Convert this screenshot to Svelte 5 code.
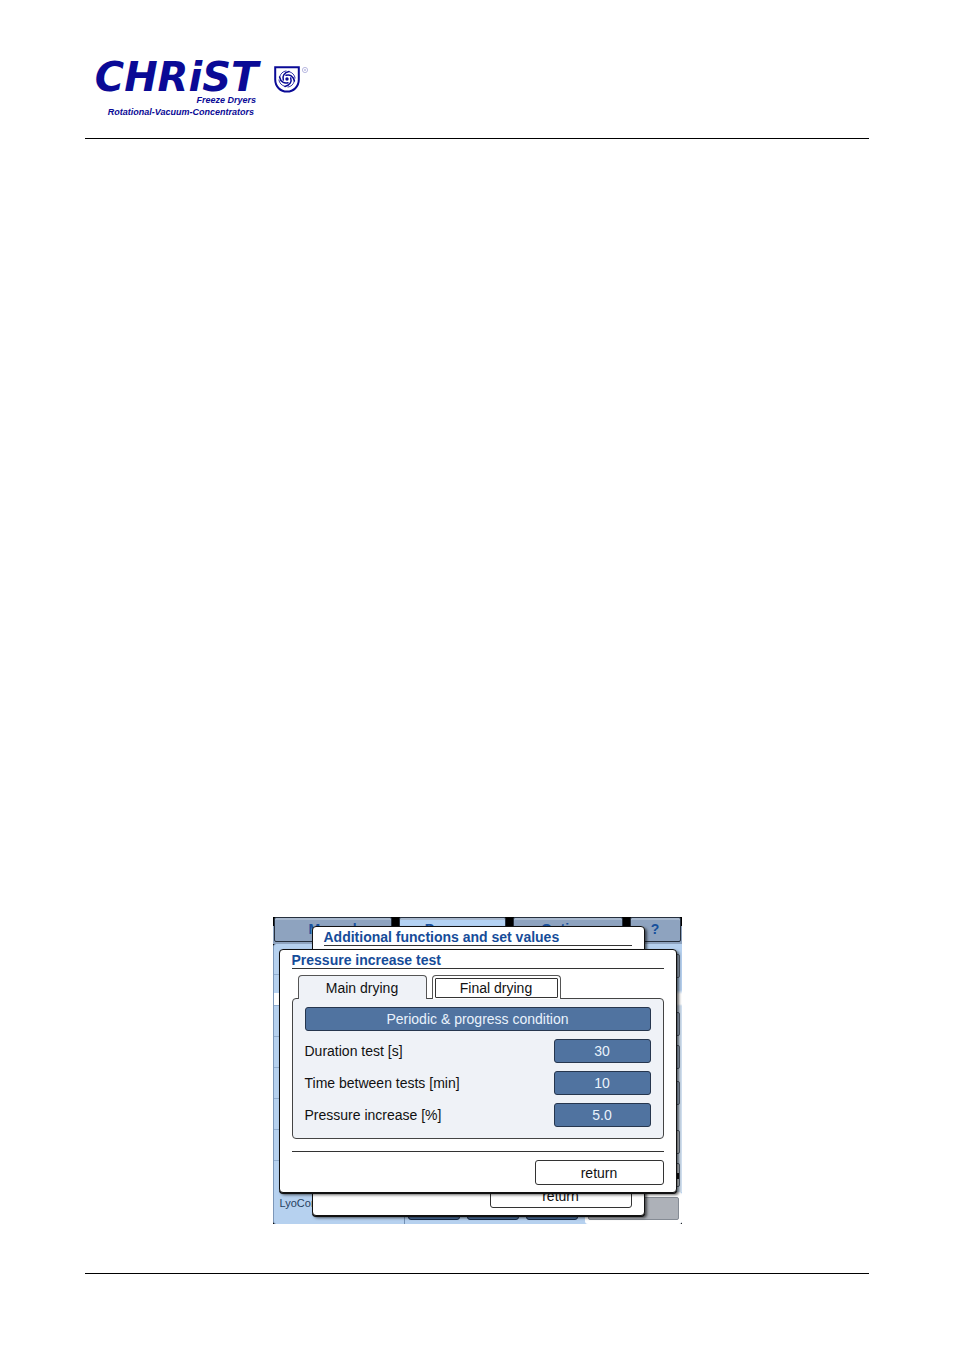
<script>
  let active = $state('Main drying');
  const sections = ['Manual', 'Process', 'Options', '?'];
  const tabs = ['Main drying', 'Final drying'];
  const fields = [
    { id: 'duration', label: 'Duration test [s]', value: '30' },
    { id: 'interval', label: 'Time between tests [min]', value: '10' },
    { id: 'pressure', label: 'Pressure increase [%]', value: '5.0' }
  ];
</script>

<div class="page">
  <header>
    <div class="brand">
      <div class="words">
        <div class="name">CHRiST</div>
        <div class="tag first">Freeze Dryers</div>
        <div class="tag">Rotational-Vacuum-Concentrators</div>
      </div>
      <svg class="shield" width="34" height="28" viewBox="0 0 34 28" aria-hidden="true">
        <g fill="none" stroke="#0a0a96">
          <path stroke-width="2" d="M1.2 1.2H24.8V13.5C24.8 20.500 19.500 25.600 13 25.600S1.200 20.500 1.200 13.500Z" />
          <circle cx="13" cy="13" r="1.700" fill="#0a0a96" stroke="none" />
          <g stroke-width="1.500" stroke-linecap="round">
            <path d="M9.300 14C8 10.500 10 6.500 15 5.600" />
            <path d="M12 9.300C15.500 8 19.500 10 20.400 15" />
            <path d="M16.700 12C18 15.500 16 19.500 11 20.400" />
            <path d="M14 16.700C10.500 18 6.500 16 5.600 11" />
          </g>
          <g stroke-width=".8" stroke-linecap="round">
            <path d="M5.600 11C6.500 7.500 8.800 5.400 12 4.900" />
            <path d="M15 5.600C18.500 6.500 20.600 8.800 21.100 12" />
            <path d="M20.400 15C19.500 18.500 17.200 20.600 14 21.100" />
            <path d="M11 20.400C7.500 19.500 5.400 17.200 4.900 14" />
          </g>
          <circle cx="31" cy="4" r="2.600" stroke="#9c9cd4" stroke-width=".7" />
          <circle cx="31" cy="4" r=".8" fill="#8c8ccc" stroke="none" />
        </g>
      </svg>
    </div>
  </header>

  <main>
    <div class="screen">
      <nav>
        {#each sections as s}
          <button class:current={s === 'Process'}>{s}</button>
        {/each}
      </nav>
      <div class="desk">
        <div class="rows"><i></i><i class="sel"></i><i></i><i></i><i></i><i></i><i></i></div>
        <div class="side"><i></i><i></i><i></i><i></i><i></i><i></i></div>
        <div class="status">
          <span>LyoControl</span>
          <i class="key"></i><i class="key"></i><i class="key"></i>
          <div class="well"><i></i></div>
        </div>
      </div>

      <section class="window back">
        <h2>Additional functions and set values</h2>
        <button class="plain">return</button>
      </section>

      <section class="window front">
        <h2>Pressure increase test</h2>
        <div class="tabs" role="tablist">
          {#each tabs as t}
            <button role="tab" aria-selected={active === t} class:active={active === t} onclick={() => (active = t)}><span>{t}</span></button>
          {/each}
        </div>
        <div class="panel">
          <button class="mode">Periodic &amp; progress condition</button>
          {#each fields as f}
            <div class="field">
              <label for={f.id}>{f.label}</label>
              <input id={f.id} value={f.value} />
            </div>
          {/each}
        </div>
        <div class="actions"><button class="plain">return</button></div>
      </section>
    </div>
  </main>
  <footer></footer>
</div>

<style>
  :global(body) { margin: 0; background: #fff; }
  * { box-sizing: border-box; }
  .page {
    min-height: 100vh;
    display: flex;
    flex-direction: column;
    padding: 0 85px;
    font-family: "Liberation Sans", Arial, sans-serif;
    font-size: 14px;
    color: #111;
  }
  header { padding: 60px 6px 20px; border-bottom: 1px solid #000; }
  .brand { display: flex; gap: 12px; align-items: flex-start; color: #0a0a96; }
  .words { width: 171px; }
  .name {
    font: italic bold 40px/34px "DejaVu Sans", sans-serif;
    text-align: center;
  }
  .tag { font: italic bold 9px/12px "Liberation Sans", Arial, sans-serif; text-align: right; padding-right: 8px; }
  .tag.first { padding-right: 6px; }
  .shield { margin-top: 6px; }
  main { flex: 1; display: flex; flex-direction: column; justify-content: flex-end; align-items: center; padding-bottom: 49px; }
  footer { height: 77px; border-top: 1px solid #000; }

  .screen { position: relative; width: 409px; height: 307px; max-width: 100%; background: #000; overflow: hidden; display: flex; flex-direction: column; }
  button, input { font: inherit; color: inherit; margin: 0; padding: 0; }
  nav { display: grid; grid-template-columns: 118px 107px 110px 51px; gap: 7px; padding: 0 1px; height: 27px; background: linear-gradient(#000 9px, #8ea3bf 9px); }
  nav button {
    background: #8ea3bf; border: 1px solid #26303e; border-radius: 2px; height: 25px; padding-bottom: 2px;
    box-shadow: inset 0 2px #a8b9cf; font-weight: bold; line-height: 20px; color: #17509c;
  }
  nav button.current { background: #b4d2f3; }
  .desk { flex: 1; display: grid; grid-template-columns: 1fr 10px; grid-template-rows: 1fr 32px; background: #b6d1ef; border-radius: 3px; border-left: 1px solid #7b96b8; }
  .rows { display: flex; flex-direction: column; }
  .rows i { height: 31px; border-bottom: 1px solid #91aed0; }
  .rows i.sel { background: linear-gradient(transparent 18px, #fff 18px, #fff 30px, transparent 30px); }
  .side { display: flex; flex-direction: column; gap: 9px; padding-top: 10px; background: linear-gradient(#b6d1ef 46px, #fff 50px, #fff 60px, #d3e2f2 62px); }
  .side i { height: 24px; border: 1px solid #5a6675; border-radius: 2px; background: #b4c6dc; margin-right: 2px; }
  .side i:nth-child(2) { margin-top: 25px; }
  .side i:nth-child(4) { margin-top: 3px; }
  .side i:nth-child(5) { margin-top: 16px; background: #dfe5ea; }
  .side i:nth-child(6) { background: linear-gradient(#dfe5ea 9px, #111 9px, #111 15px, #dfe5ea 15px); }
  .status { grid-column: 1 / -1; display: flex; gap: 3px; align-items: stretch; font-size: 11px; line-height: 22px; color: #27415f; padding-left: 6px; }
  .status span { width: 125px; border-right: 1px solid #7290b4; }
  .status .key { width: 52px; margin: 0 4px 4px 0; border: 1px solid #192b47; border-radius: 3px; background: #4d719f; }
  .well { flex: 1; background: #fff; border-radius: 3px; padding: 5px 3px 4px; display: flex; }
  .well i { flex: 1; background: #adb1b8; border: 1px solid #858b94; border-radius: 2px; }

  .window { position: absolute; background: #fff; border: 1px solid #111; border-radius: 4px; box-shadow: 0 1px #111, 2px 2px 3px #0009; display: flex; flex-direction: column; }
  .back { left: 39px; top: 9px; width: 333px; height: 290px; padding: 0 12px 7px 11px; justify-content: space-between; }
  .front { left: 6px; top: 32px; width: 398px; padding: 0 12px 7px; }
  h2 { margin: 0; font-size: 14px; line-height: 18px; font-weight: bold; color: #164c99; border-bottom: 1px solid #333; height: 19px; white-space: nowrap; padding-top: 1px; }
  .plain { height: 25px; border: 1px solid #333; border-radius: 3px; background: #fff; }
  .back .plain { align-self: flex-end; width: 142px; }
  .tabs { display: flex; gap: 5px; padding: 6px 6px 0; }
  .tabs button { width: 129px; height: 24px; margin-bottom: -1px; padding: 2px; border: 1px solid #555; border-bottom: 0; border-radius: 4px 4px 0 0; background: #fff; position: relative; display: flex; }
  .tabs button span { flex: 1; height: 20px; line-height: 18px; border: 1px solid #333; border-radius: 1px; }
  .tabs button.active { background: #eff2f7; z-index: 1; }
  .tabs button.active span { border-color: transparent; }
  .panel { border: 1px solid #444; border-radius: 4px; background: #eff2f7; padding: 8px 12px 11px; display: flex; flex-direction: column; gap: 8px; }
  .mode, .field input { height: 24px; background: #5073a0; color: #e9f2fc; border: 1px solid #26364e; border-radius: 3px; text-align: center; }
  .field { display: flex; justify-content: space-between; align-items: center; }
  .field input { width: 97px; }
  .actions { display: flex; justify-content: flex-end; margin-top: 12px; padding-top: 8px; border-top: 1px solid #333; }
  .actions .plain { width: 129px; }
</style>
